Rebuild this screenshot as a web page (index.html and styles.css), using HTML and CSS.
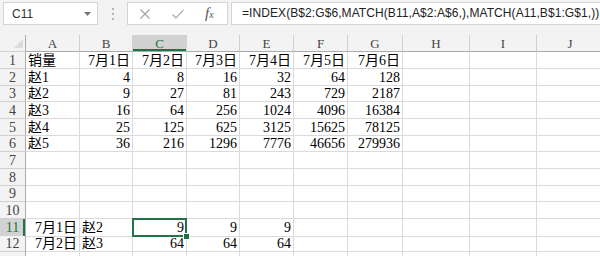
FILE: index.html
```html
<!DOCTYPE html>
<html lang="zh-CN">
<head>
  <meta charset="UTF-8" />
  <title>Sheet1 - Excel</title>
  <link rel="stylesheet" href="styles.css">
</head>
<body>
  <div class="bar">
    <div class="namebox">
      <span>C11</span>
      <svg width="7" height="4" viewBox="0 0 7 4"><path d="M0 0 H7 L3.5 4 Z" fill="#777"/></svg>
    </div>
    <div class="dots">
      <svg width="2" height="12" viewBox="0 0 2 12">
        <rect x="0" y="0" width="2" height="2" fill="#b5b5b5"/>
        <rect x="0" y="5" width="2" height="2" fill="#b5b5b5"/>
        <rect x="0" y="10" width="2" height="2" fill="#b5b5b5"/>
      </svg>
    </div>
    <div class="fxbox">
      <svg class="cancel" width="10" height="10" viewBox="0 0 10 10">
        <path d="M0.5 0.5 L9.5 9.5 M9.5 0.5 L0.5 9.5" stroke="#a6a6a6" stroke-width="1.2" fill="none"/>
      </svg>
      <svg class="enter" width="12" height="10" viewBox="0 0 12 10">
        <path d="M0.5 5.5 L4 9 L11.5 0.8" stroke="#a6a6a6" stroke-width="1.2" fill="none"/>
      </svg>
      <span class="fx">f<small>x</small></span>
    </div>
    <div class="formula">=INDEX(B$2:G$6,MATCH(B11,A$2:A$6,),MATCH(A11,B$1:G$1,))</div>
  </div>

  <div class="sheet">
    <div class="row head">
      <div class="corner"><svg width="9" height="9" viewBox="0 0 9 9"><path d="M9 0 V9 H0 Z" fill="#dcdcdc"/></svg></div>
      <div>A</div><div>B</div><div class="on">C</div><div>D</div><div>E</div><div>F</div><div>G</div><div>H</div><div>I</div><div>J</div>
    </div>
    <div class="row">
      <div>1</div><div>销量</div><div class="num">7月1日</div><div class="num">7月2日</div><div class="num">7月3日</div><div class="num">7月4日</div><div class="num">7月5日</div><div class="num">7月6日</div><div></div><div></div><div></div>
    </div>
    <div class="row">
      <div>2</div><div>赵1</div><div class="num">4</div><div class="num">8</div><div class="num">16</div><div class="num">32</div><div class="num">64</div><div class="num">128</div><div></div><div></div><div></div>
    </div>
    <div class="row short">
      <div>3</div><div>赵2</div><div class="num">9</div><div class="num">27</div><div class="num">81</div><div class="num">243</div><div class="num">729</div><div class="num">2187</div><div></div><div></div><div></div>
    </div>
    <div class="row">
      <div>4</div><div>赵3</div><div class="num">16</div><div class="num">64</div><div class="num">256</div><div class="num">1024</div><div class="num">4096</div><div class="num">16384</div><div></div><div></div><div></div>
    </div>
    <div class="row">
      <div>5</div><div>赵4</div><div class="num">25</div><div class="num">125</div><div class="num">625</div><div class="num">3125</div><div class="num">15625</div><div class="num">78125</div><div></div><div></div><div></div>
    </div>
    <div class="row short">
      <div>6</div><div>赵5</div><div class="num">36</div><div class="num">216</div><div class="num">1296</div><div class="num">7776</div><div class="num">46656</div><div class="num">279936</div><div></div><div></div><div></div>
    </div>
    <div class="row">
      <div>7</div><div></div><div></div><div></div><div></div><div></div><div></div><div></div><div></div><div></div><div></div>
    </div>
    <div class="row">
      <div>8</div><div></div><div></div><div></div><div></div><div></div><div></div><div></div><div></div><div></div><div></div>
    </div>
    <div class="row short">
      <div>9</div><div></div><div></div><div></div><div></div><div></div><div></div><div></div><div></div><div></div><div></div>
    </div>
    <div class="row">
      <div>10</div><div></div><div></div><div></div><div></div><div></div><div></div><div></div><div></div><div></div><div></div>
    </div>
    <div class="row">
      <div class="on">11</div><div class="num">7月1日</div><div>赵2</div><div class="num sel">9</div><div class="num">9</div><div class="num">9</div><div></div><div></div><div></div><div></div><div></div>
    </div>
    <div class="row short">
      <div>12</div><div class="num">7月2日</div><div>赵3</div><div class="num">64</div><div class="num">64</div><div class="num">64</div><div></div><div></div><div></div><div></div><div></div>
    </div>
    <div class="row tail">
      <div></div><div></div><div></div><div></div><div></div><div></div><div></div><div></div><div></div><div></div><div></div>
    </div>
  </div>
</body>
</html>
```

FILE: styles.css
```css
body {
  margin: 0;
  width: 600px;
  height: 256px;
  overflow: hidden;
  background: #fff;
  font-family: "Liberation Serif", "Noto Sans CJK SC", serif;
}

/* formula bar */

.bar {
  display: flex;
  align-items: flex-start;
  height: 35px;
  box-sizing: border-box;
  padding: 2px 0 0 3px;
  background: #f3f3f3;
  font-family: "Liberation Sans", "Noto Sans CJK SC", sans-serif;
}

.namebox {
  width: 95px;
  height: 23px;
  box-sizing: border-box;
  display: flex;
  align-items: center;
  justify-content: space-between;
  padding: 0 6px 0 8px;
  border: 1px solid #d4d4d4;
  background: #fff;
  font-size: 12px;
  color: #333;
}

.dots {
  width: 29px;
  display: flex;
  justify-content: center;
  padding-top: 6px;
}

.fxbox {
  width: 101px;
  height: 23px;
  box-sizing: border-box;
  display: flex;
  align-items: center;
  padding-left: 12px;
  border: 1px solid #d4d4d4;
  background: #fff;
}

.fxbox .enter {
  margin-left: 22px;
}

.fx {
  margin-left: 21px;
  font-family: "Liberation Serif", serif;
  font-style: italic;
  font-size: 15px;
  color: #555;
}

.fx small {
  font-size: 10px;
}

.formula {
  flex: 1;
  height: 23px;
  box-sizing: border-box;
  margin-left: 3px;
  padding-left: 10px;
  border: 1px solid #d4d4d4;
  border-right: 0;
  background: #fff;
  font-size: 12px;
  letter-spacing: 0.08px;
  line-height: 21px;
  white-space: nowrap;
  overflow: hidden;
  color: #222;
}

/* grid */

.sheet {
  font-size: 14px;
  color: #000;
}

.row {
  display: grid;
  grid-template-columns: 26px 54px 53px 54px 53px 54px 54px 55px 67px 67px 67px;
  height: 17px;
}

.row.short {
  height: 16px;
}

.row.tail {
  height: 4px;
}

.row > div {
  box-sizing: border-box;
  padding: 0 2px;
  border-right: 1px solid #dadada;
  border-bottom: 1px solid #dadada;
  line-height: 17px;
  white-space: nowrap;
  overflow: hidden;
}

.row.short > div {
  line-height: 16px;
}

.row.tail > div {
  border-bottom: 0;
}

.num {
  text-align: right;
}

.row > div:first-child,
.head > div {
  background: #f3f3f3;
  text-align: center;
  color: #444;
  border-right-color: #d0d0d0;
  border-bottom-color: #d0d0d0;
}

.head > div {
  font-size: 13px;
  border-bottom-color: #ababab;
}

.row > div:first-child {
  border-right-color: #ababab;
}

.corner {
  display: flex;
  justify-content: flex-end;
  align-items: flex-end;
  padding: 0 2px 3px 0 !important;
}

.head > .on {
  background: #d2d2d2;
  color: #217346;
  box-shadow: inset 0 -2px #217346;
}

.row > .on:first-child {
  background: #d2d2d2;
  color: #217346;
  box-shadow: inset -2px 0 #217346;
}

.sel {
  position: relative;
  overflow: visible !important;
}

.sel::after {
  content: "";
  position: absolute;
  left: -1px;
  top: -1px;
  right: -1px;
  bottom: -1px;
  border: 2px solid #217346;
}

.sel::before {
  content: "";
  position: absolute;
  right: -4px;
  bottom: -4px;
  width: 5px;
  height: 5px;
  background: #217346;
  border: 1px solid #fff;
  z-index: 2;
}
```
